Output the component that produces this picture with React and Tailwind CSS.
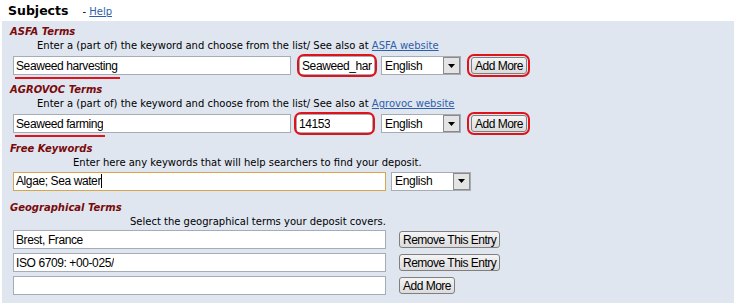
import React from 'react';

const Title = ({ children }) => (
  <div className="text-[10px] leading-[14px] font-bold italic text-[#7a0a0a] ml-[8px]">{children}</div>
);

const Note = ({ pad, children }) => (
  <div className="text-[10px] leading-[14px] text-black whitespace-nowrap" style={{ paddingLeft: pad }}>
    {children}
  </div>
);

const TextBox = ({ w, value, focused, children }) => (
  <div
    className={`relative h-[19px] bg-white border flex items-center px-[2px] overflow-hidden whitespace-nowrap font-['Liberation_Sans',Arial,sans-serif] text-[12px] tracking-[-0.4px] text-black ${
      focused ? 'border-[#d9a54a]' : 'border-[#a5acb5]'
    }`}
    style={{ width: w }}
  >
    <span className="overflow-hidden">{value}</span>
    {focused && <span className="w-px h-[14px] bg-black" />}
    {children}
  </div>
);

const Select = ({ w = 80 }) => (
  <div
    className="h-[19px] bg-white border border-[#a5acb5] flex items-center justify-between font-['Liberation_Sans',Arial,sans-serif] text-[12px] tracking-[-0.3px] text-black"
    style={{ width: w }}
  >
    <span className="pl-[3px]">English</span>
    <span className="w-[17px] h-[17px] bg-[#e4e4e4] border border-[#8a8a8a] flex items-center justify-center">
      <svg width="7" height="4" viewBox="0 0 7 4">
        <path d="M0 0h7L3.5 4z" fill="#000" />
      </svg>
    </span>
  </div>
);

const Btn = ({ children }) => (
  <div className="h-[17px] px-[3px] bg-gradient-to-b from-[#f4f4f4] to-[#dcdcdc] border border-[#7f7f7f] rounded-[3px] flex items-center font-['Liberation_Sans',Arial,sans-serif] text-[12px] tracking-[-0.5px] text-black whitespace-nowrap">
    {children}
  </div>
);

const Ring = ({ className }) => (
  <span className={`absolute border-[2px] border-[#e0121a] rounded-[7px] pointer-events-none ${className}`} />
);

export default function App() {
  return (
    <div className="w-[734px] h-[303px] bg-white overflow-hidden font-['DejaVu_Sans',Verdana,sans-serif]">
      {/* Heading */}
      <div className="h-[21px] flex items-end pl-[8px] pb-[2px]">
        <span className="text-[12.5px] leading-[17px] font-bold text-black">Subjects</span>
        <span className="ml-[14px] text-[10px] leading-[14px] text-black">
          - <a className="underline text-[#2f5fa8]">Help</a>
        </span>
      </div>

      <div className="ml-[2px] h-[282px] bg-[#dfe6f0] pt-[4px]">
        {/* ASFA */}
        <Title>ASFA Terms</Title>
        <Note pad={35}>
          Enter a (part of) the keyword and choose from the list/ See also at{' '}
          <a className="underline text-[#2f5fa8]">ASFA website</a>
        </Note>
        <div className="flex items-center mt-[1px] ml-[11px] h-[23px]">
          <div className="relative">
            <TextBox w={278} value="Seaweed harvesting" />
            <span className="absolute left-[2px] top-[21px] w-[105px] h-[2px] bg-[#e0121a]" />
          </div>
          <div className="relative ml-[8px]">
            <TextBox w={76} value="Seaweed_harv" />
            <Ring className="-left-[2px] -top-[2px] -right-[2px] -bottom-[2px]" />
          </div>
          <div className="ml-[6px]">
            <Select />
          </div>
          <div className="relative ml-[10px]">
            <Btn>Add More</Btn>
            <Ring className="-left-[4px] -top-[3px] -right-[3px] -bottom-[3px]" />
          </div>
        </div>

        {/* AGROVOC */}
        <div className="mt-[6px]">
          <Title>AGROVOC Terms</Title>
        </div>
        <Note pad={35}>
          Enter a (part of) the keyword and choose from the list/ See also at{' '}
          <a className="underline text-[#2f5fa8]">Agrovoc website</a>
        </Note>
        <div className="flex items-center mt-[1px] ml-[11px] h-[23px]">
          <div className="relative">
            <TextBox w={278} value="Seaweed farming" />
            <span className="absolute left-[2px] top-[21px] w-[90px] h-[2px] bg-[#e0121a]" />
          </div>
          <div className="relative ml-[5px]">
            <TextBox w={77} value="14153" />
            <Ring className="-left-[2px] -top-[2px] -right-[2px] -bottom-[2px]" />
          </div>
          <div className="ml-[8px]">
            <Select />
          </div>
          <div className="relative ml-[10px]">
            <Btn>Add More</Btn>
            <Ring className="-left-[4px] -top-[3px] -right-[3px] -bottom-[3px]" />
          </div>
        </div>

        {/* Free keywords */}
        <div className="mt-[7px]">
          <Title>Free Keywords</Title>
        </div>
        <Note pad={71}>Enter here any keywords that will help searchers to find your deposit.</Note>
        <div className="flex items-center ml-[11px] h-[22px]">
          <TextBox w={373} value="Algae; Sea water" focused />
          <div className="ml-[5px]">
            <Select />
          </div>
        </div>

        {/* Geographical */}
        <div className="mt-[9px]">
          <Title>Geographical Terms</Title>
        </div>
        <Note pad={128}>Select the geographical terms your deposit covers.</Note>
        <div className="ml-[11px] mt-[1px] flex flex-col gap-[4px]">
          {['Brest, France', 'ISO 6709: +00-025/', ''].map((v, i) => (
            <div key={i} className="flex items-center">
              <TextBox w={373} value={v} />
              <div className="ml-[13px]">
                <Btn>{i < 2 ? 'Remove This Entry' : 'Add More'}</Btn>
              </div>
            </div>
          ))}
        </div>
      </div>
    </div>
  );
}
